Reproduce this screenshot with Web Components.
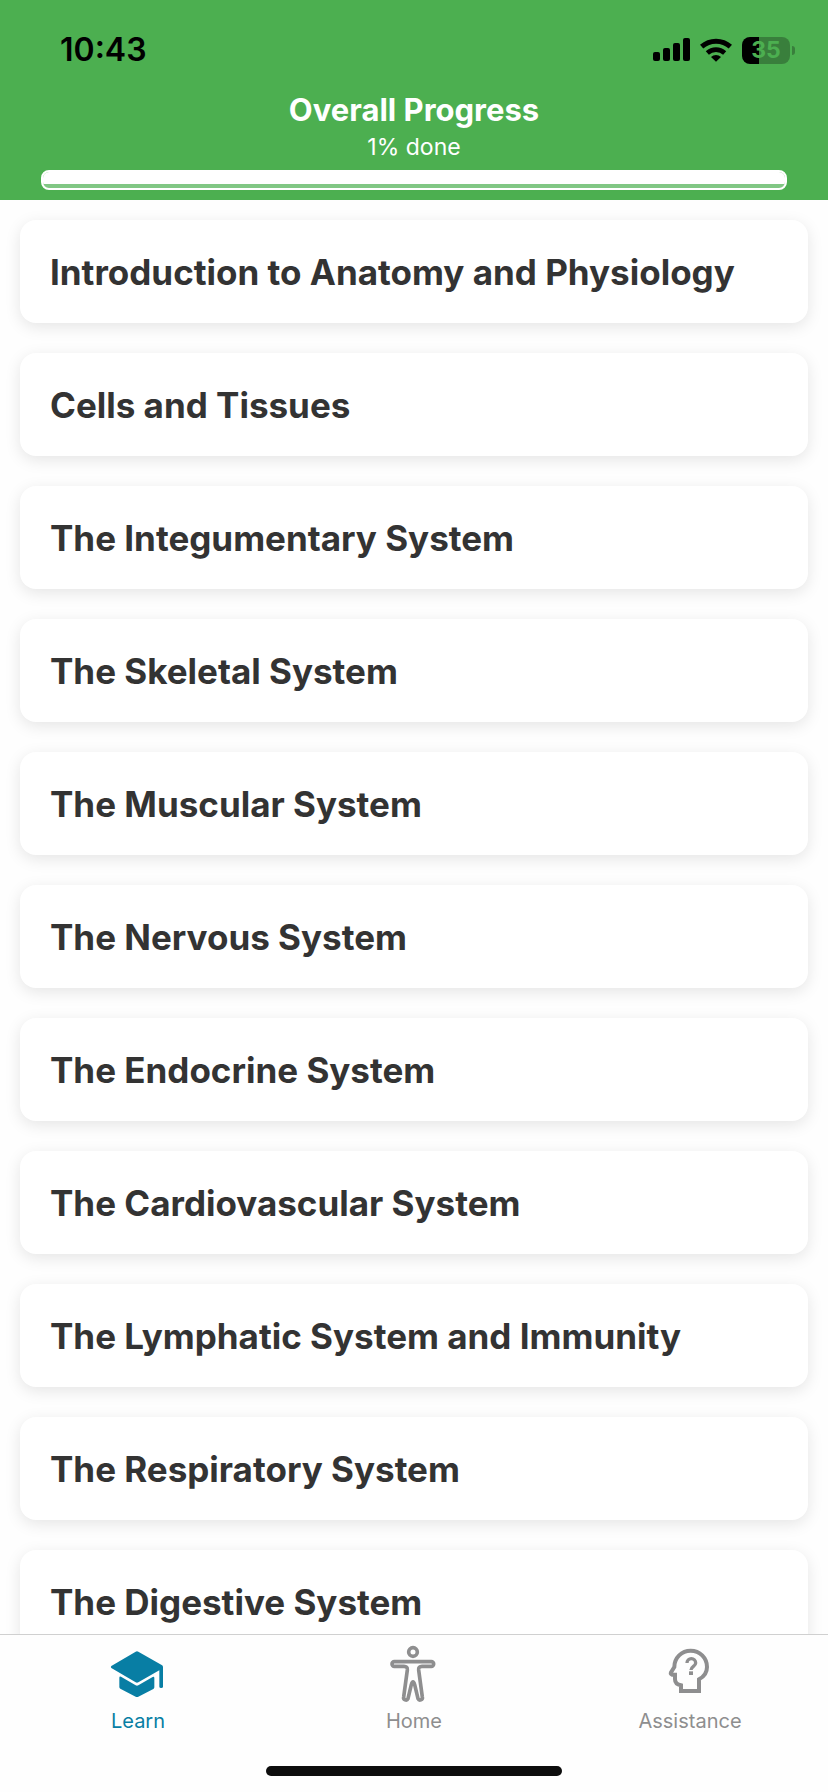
<!DOCTYPE html>
<html lang="en">
<head>
<meta charset="utf-8">
<meta name="viewport" content="width=device-width, initial-scale=1">
<title>Learn</title>
<style>
    body {
        margin: 0;
        font-family: Inter, "Liberation Sans", sans-serif;
        background: #fefefe;
    }
</style>
</head>
<body>
<learn-app>
    <status-bar slot="header" time="10:43" battery="35"></status-bar>
    <overall-progress slot="header" value="1">Overall Progress</overall-progress>

    <topic-card>Introduction to Anatomy and Physiology</topic-card>
    <topic-card>Cells and Tissues</topic-card>
    <topic-card>The Integumentary System</topic-card>
    <topic-card>The Skeletal System</topic-card>
    <topic-card>The Muscular System</topic-card>
    <topic-card>The Nervous System</topic-card>
    <topic-card>The Endocrine System</topic-card>
    <topic-card>The Cardiovascular System</topic-card>
    <topic-card>The Lymphatic System and Immunity</topic-card>
    <topic-card>The Respiratory System</topic-card>
    <topic-card>The Digestive System</topic-card>

    <tab-item slot="tabs" active>
        <svg slot="icon" viewBox="84 72 180 180" fill="currentColor" aria-hidden="true">
            <path d="M94 138L167 95q4-2 8 0l70 40q4 2 4 6v59q0 4-5.500 4t-5.500-4v-49L175 187q-4 2-8 0L94 144q-3-3 0-6z"/>
            <path d="M118 173q0-5 5-3l44 26q4 2 8 0l43-25q5-2 5 3v28q0 3-3 5l-45 23q-4 2-8 0l-46-24q-3-2-3-5z"/>
        </svg>
        Learn
    </tab-item>
    <tab-item slot="tabs">
        <svg slot="icon" viewBox="72 72 180 180" fill="none" stroke="currentColor" stroke-width="11" stroke-linejoin="round" aria-hidden="true">
            <circle cx="159" cy="96" r="13"/>
            <path d="M103 125H214a7 7 0 0 1 0 14H186q-11 0-10 11L187 231a7 7 0 0 1-13 5L164 194q-5-17-10 0L144 236a7 7 0 0 1-13-5L142 150q1-11-10-11H103a7 7 0 0 1 0-14z"/>
        </svg>
        Home
    </tab-item>
    <tab-item slot="tabs">
        <svg slot="icon" viewBox="120 72 180 180" fill="none" stroke="currentColor" stroke-width="12" aria-hidden="true">
            <path d="M183 213H237V178C252 170 261 157 261 141A49 49 0 0 0 163 141L153 157Q151 162 156 164H165V178Q165 193 183 196z"/>
            <path stroke-width="10" d="M201 129a13 13 0 0 1 26 0c0 10-14 10-14 21"/>
            <path fill="currentColor" stroke="none" d="M207 154h12v11h-12z"/>
        </svg>
        Assistance
    </tab-item>
</learn-app>

<script>
const appTemplate = document.createElement('template');
appTemplate.innerHTML = `
<style>
    :host {
        display: flex;
        flex-direction: column;
        height: 100vh;
        overflow: hidden;
    }

    header {
        background: #4caf50;
    }

    main {
        display: flex;
        flex: 1;
        flex-direction: column;
        gap: 30px;
        min-height: 0;
        padding: 20px 20px 0;
        overflow: hidden;
    }

    footer {
        border-top: 1px solid #d0d0d0;
        background: #fefefe;
    }

    nav {
        display: grid;
        grid-template-columns: repeat(3, 1fr);
    }

    .indicator {
        width: 296px;
        height: 10px;
        margin: 32px auto 16px;
        border-radius: 5px;
        background: #0d0d0d;
    }
</style>
<header><slot name="header"></slot></header>
<main><slot></slot></main>
<footer>
    <nav><slot name="tabs"></slot></nav>
    <div class="indicator"></div>
</footer>
`;

class LearnApp extends HTMLElement {

    constructor() {
        super();

        this.attachShadow({mode: 'open'});
        this.shadowRoot.appendChild(appTemplate.content.cloneNode(true));
    }

}

customElements.define('learn-app', LearnApp);

const statusTemplate = document.createElement('template');
statusTemplate.innerHTML = `
<style>
    :host {
        display: flex;
        align-items: center;
        justify-content: space-between;
        height: 40px;
        padding: 30px 33px 0 60px;
        color: #000;
    }

    .time {
        font-size: 32px;
        font-weight: 600;
        line-height: 40px;
    }

    .icons {
        display: flex;
        align-items: center;
        gap: 10px;
    }

    svg {
        display: block;
    }

    .battery {
        display: flex;
        align-items: center;
        gap: 2px;
    }

    .level {
        width: 48px;
        border-radius: 8px;
        background: linear-gradient(to right, #000 var(--level), #397f3c var(--level));
        color: #4caf50;
        font-size: 23px;
        font-weight: 700;
        line-height: 27px;
        text-align: center;
    }

    .cap {
        width: 3px;
        height: 9px;
        border-radius: 0 3px 3px 0;
        background: #397f3c;
    }
</style>
<span class="time"></span>
<div class="icons">
    <svg width="37" height="24" viewBox="0 0 37 24" aria-hidden="true">
        <rect y="14" width="7" height="9" rx="2"/>
        <rect x="10" y="10" width="7" height="13" rx="2"/>
        <rect x="20" y="5" width="7" height="18" rx="2"/>
        <rect x="30" width="7" height="23" rx="2"/>
    </svg>
    <svg width="32" height="24" viewBox="-48 -73 96 72" fill="none" stroke="#000" aria-hidden="true">
        <path stroke-width="15" d="M-43-47A65 65 0 0 1 43-47"/>
        <path stroke-width="14" d="M-26-28A39 39 0 0 1 26-28"/>
        <path fill="#000" stroke="none" d="M0-2L-15-16A22 22 0 0 1 15-16z"/>
    </svg>
    <div class="battery">
        <span class="level"></span>
        <span class="cap"></span>
    </div>
</div>
`;

class StatusBar extends HTMLElement {

    constructor() {
        super();

        this.attachShadow({mode: 'open'});
        this.shadowRoot.appendChild(statusTemplate.content.cloneNode(true));
    }

    connectedCallback() {
        const level = this.shadowRoot.querySelector('.level');
        level.textContent = this.getAttribute('battery');
        level.style.setProperty('--level', this.getAttribute('battery') + '%');
        this.shadowRoot.querySelector('.time').textContent = this.getAttribute('time');
    }

}

customElements.define('status-bar', StatusBar);

const progressTemplate = document.createElement('template');
progressTemplate.innerHTML = `
<style>
    :host {
        display: block;
        padding: 20px 41px 10px;
        color: #fff;
        text-align: center;
    }

    h1 {
        margin: 0 0 2px;
        font-size: 31px;
        font-weight: 700;
        line-height: 40px;
    }

    p {
        margin: 0 0 8px;
        font-size: 23px;
        line-height: 30px;
    }

    .bar {
        height: 16px;
        border: 2px solid #fff;
        border-radius: 8px;
        background: #81c784;
        overflow: hidden;
    }

    .track {
        height: 12px;
        background: #fff;
    }
</style>
<h1><slot></slot></h1>
<p></p>
<div class="bar" role="progressbar" aria-label="Overall progress" aria-valuemin="0" aria-valuemax="100">
    <div class="track"></div>
</div>
`;

class OverallProgress extends HTMLElement {

    constructor() {
        super();

        this.attachShadow({mode: 'open'});
        this.shadowRoot.appendChild(progressTemplate.content.cloneNode(true));
    }

    connectedCallback() {
        const value = this.getAttribute('value');
        this.shadowRoot.querySelector('p').textContent = value + '% done';
        this.shadowRoot.querySelector('.bar').setAttribute('aria-valuenow', value);
    }

}

customElements.define('overall-progress', OverallProgress);

const cardTemplate = document.createElement('template');
cardTemplate.innerHTML = `
<style>
    :host {
        display: block;
        flex: none;
    }

    a {
        display: block;
        padding: 31px 30px 29px;
        border-radius: 16px;
        background: #fff;
        box-shadow: 0 4px 16px rgba(0, 0, 0, 0.1);
        color: #333;
        font-size: 35px;
        font-weight: 700;
        line-height: 43px;
        text-decoration: none;
    }
</style>
<a href="#"><slot></slot></a>
`;

class TopicCard extends HTMLElement {

    constructor() {
        super();

        this.attachShadow({mode: 'open'});
        this.shadowRoot.appendChild(cardTemplate.content.cloneNode(true));
    }

}

customElements.define('topic-card', TopicCard);

const tabTemplate = document.createElement('template');
tabTemplate.innerHTML = `
<style>
    :host {
        display: block;
        color: #8e8e8f;
    }

    :host([active]) {
        color: #087ea4;
    }

    a {
        display: flex;
        flex-direction: column;
        align-items: center;
        gap: 4px;
        padding-top: 9px;
        color: inherit;
        font-size: 20px;
        line-height: 26px;
        text-decoration: none;
    }

    ::slotted(svg) {
        display: block;
        width: 60px;
        height: 60px;
    }
</style>
<a href="#">
    <slot name="icon"></slot>
    <span><slot></slot></span>
</a>
`;

class TabItem extends HTMLElement {

    constructor() {
        super();

        this.attachShadow({mode: 'open'});
        this.shadowRoot.appendChild(tabTemplate.content.cloneNode(true));
    }

}

customElements.define('tab-item', TabItem);
</script>
</body>
</html>
